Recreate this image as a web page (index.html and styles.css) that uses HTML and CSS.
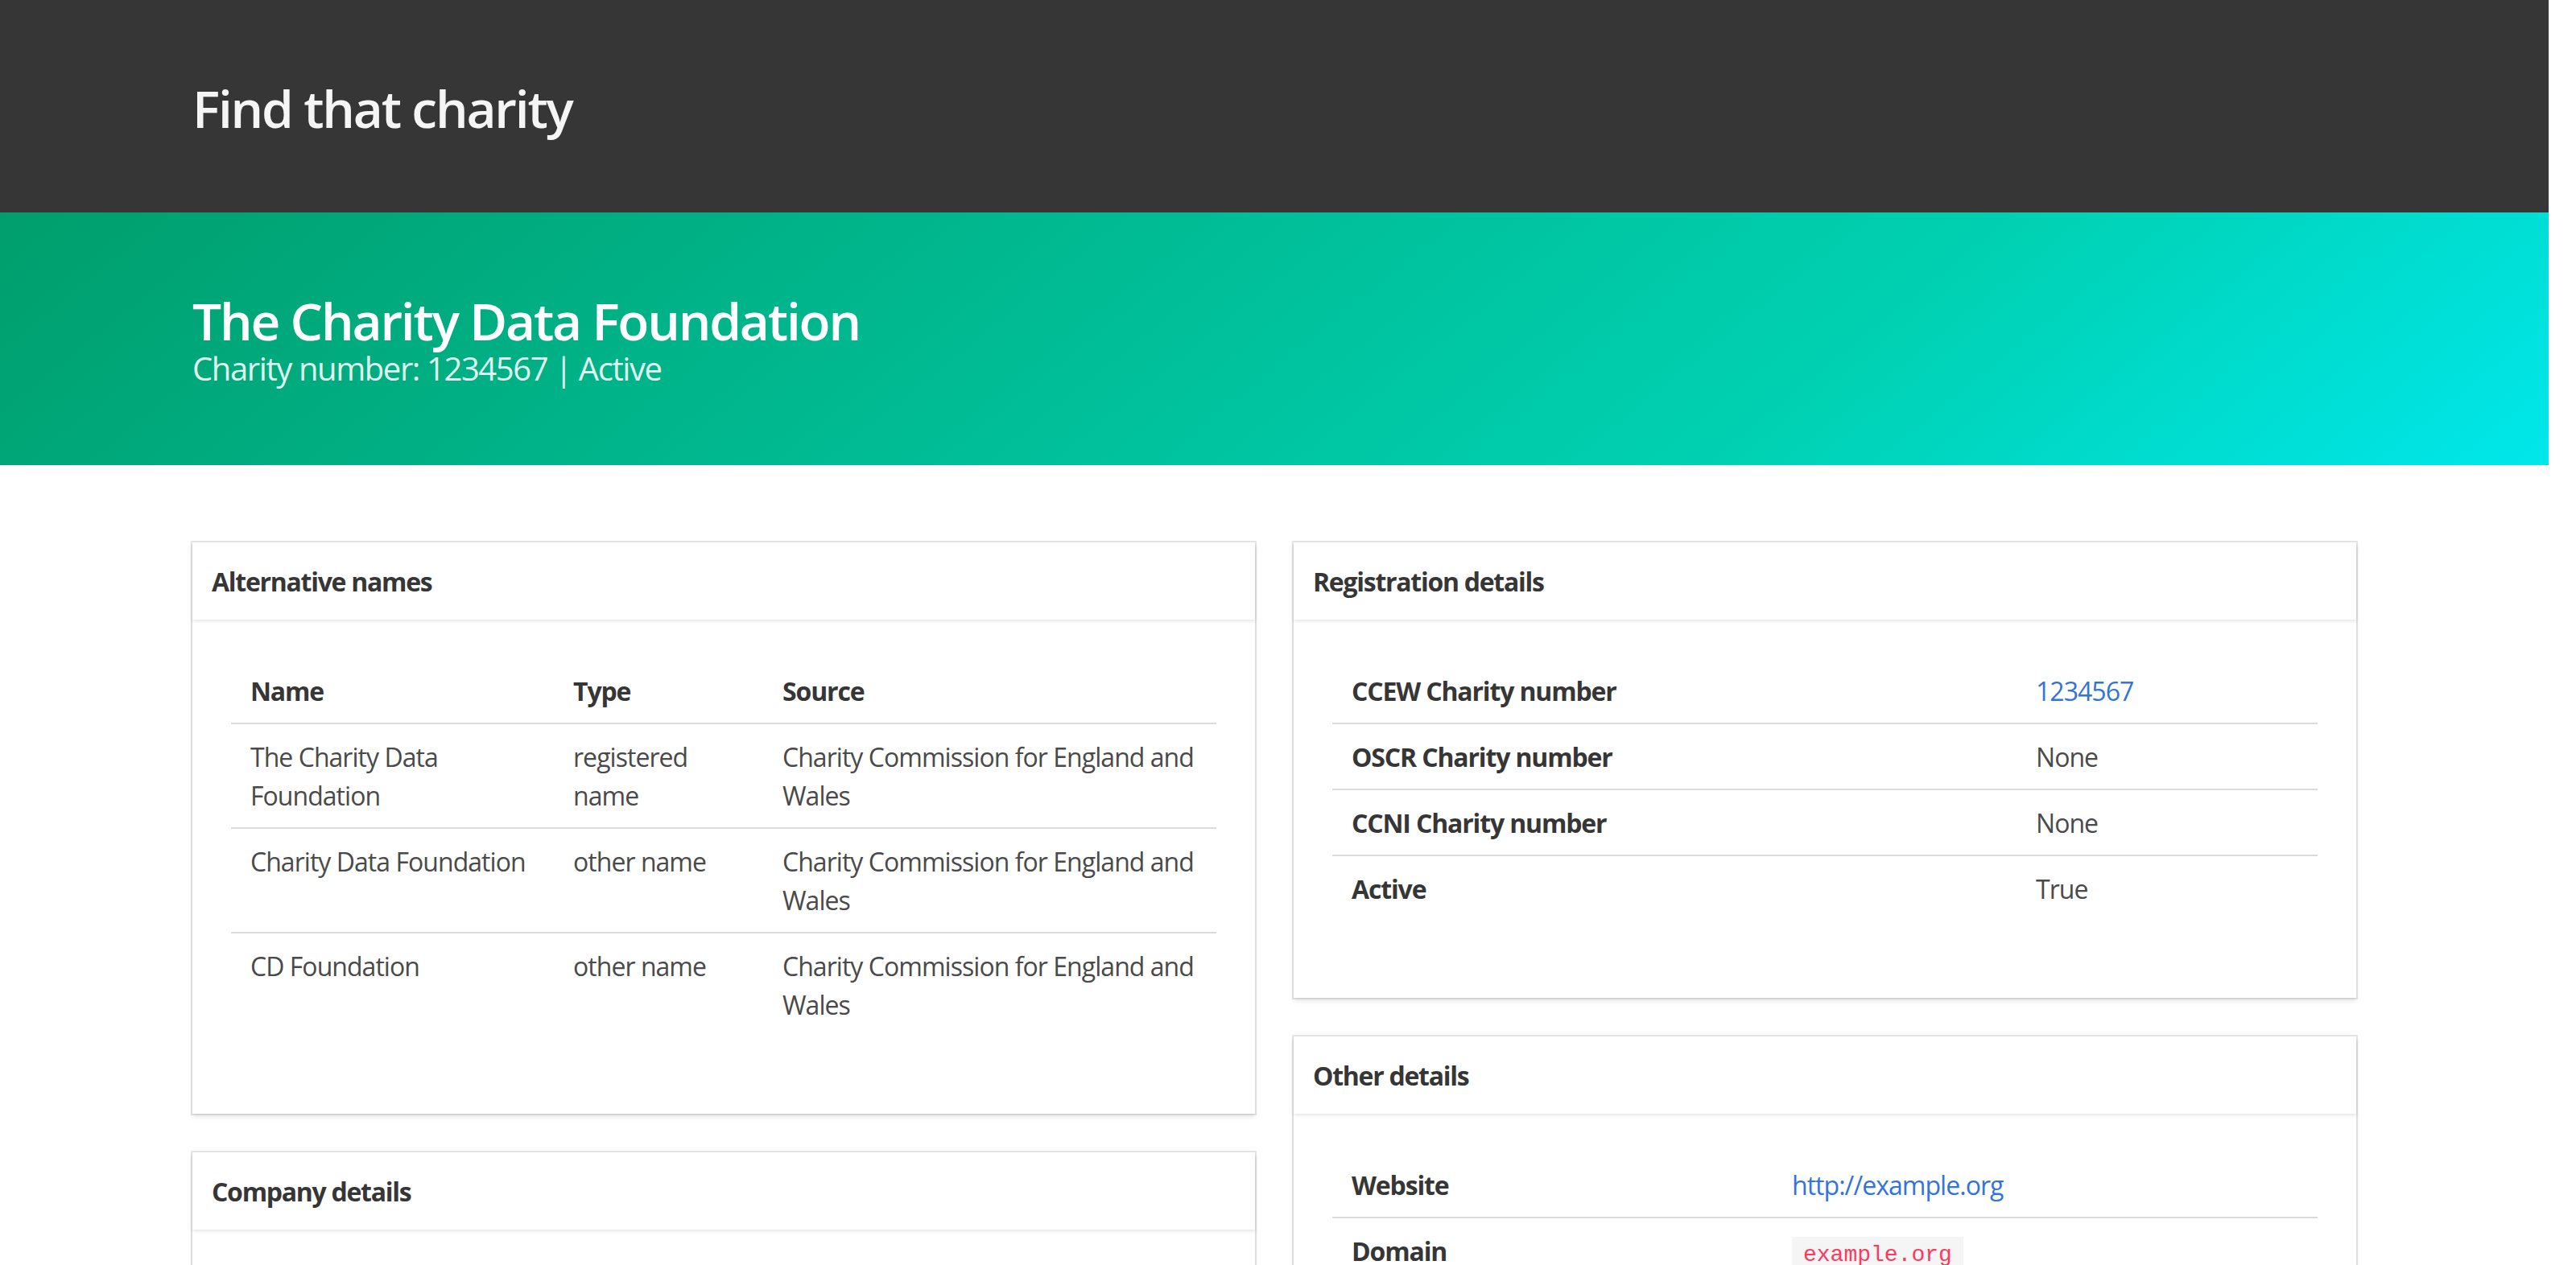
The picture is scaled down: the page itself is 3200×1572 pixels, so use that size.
FILE: index.html
```html
<!DOCTYPE html>
<html lang="en">
<head>
<meta charset="utf-8">
<title>Find that charity</title>
<link rel="stylesheet" href="styles.css">
</head>
<body>
<div class="page">
  <section class="hero hero-dark">
    <div class="hero-body">
      <div class="container">
        <h1 class="title">Find that charity</h1>
      </div>
    </div>
  </section>
  <section class="hero hero-primary">
    <div class="hero-body">
      <div class="container">
        <h1 class="title">The Charity Data Foundation</h1>
        <h2 class="subtitle">Charity number: 1234567 | Active</h2>
      </div>
    </div>
  </section>
  <section class="section">
    <div class="container columns">
      <div class="column">
        <div class="card">
          <header class="card-header"><p class="card-header-title">Alternative names</p></header>
          <div class="card-content">
            <table class="table">
              <thead>
                <tr><th class="w-name">Name</th><th class="w-type">Type</th><th class="w-source">Source</th></tr>
              </thead>
              <tbody>
                <tr><td>The Charity Data Foundation</td><td>registered name</td><td>Charity Commission for England and Wales</td></tr>
                <tr><td>Charity Data Foundation</td><td>other name</td><td>Charity Commission for England and Wales</td></tr>
                <tr><td>CD Foundation</td><td>other name</td><td>Charity Commission for England and Wales</td></tr>
              </tbody>
            </table>
          </div>
        </div>
        <div class="card">
          <header class="card-header"><p class="card-header-title">Company details</p></header>
          <div class="card-content">
            <table class="table">
              <tbody>
                <tr><th class="w-reg">Company number</th><td>None</td></tr>
              </tbody>
            </table>
          </div>
        </div>
      </div>
      <div class="column">
        <div class="card">
          <header class="card-header"><p class="card-header-title">Registration details</p></header>
          <div class="card-content">
            <table class="table">
              <tbody>
                <tr><th class="w-reg">CCEW Charity number</th><td><a href="#">1234567</a></td></tr>
                <tr><th>OSCR Charity number</th><td>None</td></tr>
                <tr><th>CCNI Charity number</th><td>None</td></tr>
                <tr><th>Active</th><td>True</td></tr>
              </tbody>
            </table>
          </div>
        </div>
        <div class="card">
          <header class="card-header"><p class="card-header-title">Other details</p></header>
          <div class="card-content">
            <table class="table">
              <tbody>
                <tr><th class="w-other">Website</th><td><a href="#">http://example.org</a></td></tr>
                <tr><th>Domain</th><td><code>example.org</code></td></tr>
                <tr><th>Email</th><td>info@example.org</td></tr>
              </tbody>
            </table>
          </div>
        </div>
      </div>
    </div>
  </section>
</div>
</body>
</html>
```

FILE: styles.css
```css
* { box-sizing: border-box; }
html, body { margin: 0; padding: 0; background: #fff; }
body {
  font-family: "Open Sans", "Noto Sans", sans-serif;
  font-size: 32px;
  line-height: 1.5;
  color: #4a4a4a;
}
.page { margin-right: 34px; }
.container { width: 2688px; margin: 0 auto; }

.hero-body { padding: 96px 48px; }
.title {
  margin: 0;
  padding-top: 6px;
  font-size: 64px;
  font-weight: 600;
  line-height: 66px;
  letter-spacing: -0.034em;
}
.subtitle {
  margin: 0;
  padding-top: 2px;
  font-size: 40px;
  font-weight: 400;
  line-height: 48px;
  letter-spacing: -0.035em;
}
.hero-dark { background: #363636; }
.hero-dark .title { color: #f5f5f5; }
.hero-primary {
  background-image: linear-gradient(141deg, #009e6c 0%, #00d1b2 71%, #00e7eb 100%);
}
.hero-primary .title { color: #fff; }
.hero-primary .subtitle { color: rgba(255, 255, 255, 0.9); }

.section { padding: 96px 0; }
.columns { display: flex; gap: 48px; align-items: flex-start; }
.column { flex: 1 1 0; min-width: 0; display: flex; flex-direction: column; gap: 48px; }

.card {
  background: #fff;
  box-shadow: 0 4px 6px rgba(10, 10, 10, 0.1), 0 0 0 2px rgba(10, 10, 10, 0.1);
}
.card-header {
  display: flex;
  box-shadow: 0 2px 4px rgba(10, 10, 10, 0.1);
}
.card-header-title {
  margin: 0;
  padding: 25px 24px 23px;
  color: #363636;
  font-weight: 700;
  letter-spacing: -0.04em;
}
.card-content { padding: 48px; }

.table {
  width: 100%;
  border-collapse: collapse;
  table-layout: fixed;
  margin-bottom: 48px;
}
.table th, .table td {
  padding: 17px 24px 15px;
  border-bottom: 2px solid #dbdbdb;
  text-align: left;
  vertical-align: top;
}
.table tbody tr:last-child th, .table tbody tr:last-child td { border-bottom: 0; }
.table th { color: #363636; font-weight: 700; letter-spacing: -0.036em; }
.table td { letter-spacing: -0.03em; }
.w-name { width: 401px; }
.w-type { width: 260px; }
.w-source { width: 563px; }
.w-reg { width: 850px; }
.w-other { width: 547px; }

a { color: #3273dc; text-decoration: none; }
code {
  font-family: "Liberation Mono", monospace;
  font-size: 28px;
  letter-spacing: 0;
  color: #ff3860;
  background: #f5f5f5;
  padding: 7px 14px;
}
```
